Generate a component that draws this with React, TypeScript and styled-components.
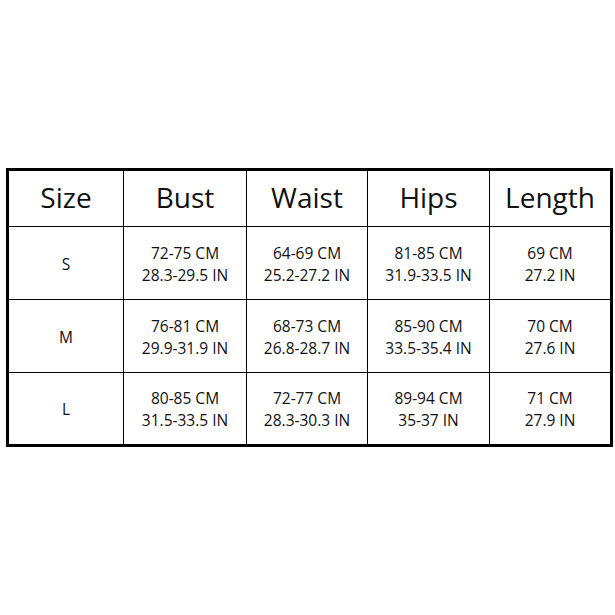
import React from "react";
import styled, { createGlobalStyle } from "styled-components";

const Global = createGlobalStyle`
  html, body { margin: 0; padding: 0; background: #fff; }
  body { font-family: "Open Sans", "Noto Sans", sans-serif; color: #111; }
`;

const Page = styled.div`
  width: 615px;
  height: 615px;
  padding: 168px 0 0 6px;
  box-sizing: border-box;
`;

const Table = styled.div`
  width: 607px;
  box-sizing: border-box;
  border: 3px solid #000;
  background: #000;
  display: grid;
  grid-template-columns: 114px 122px 120px 121px 120px;
  grid-template-rows: 55px 72px 72px 71px;
  gap: 1px;
`;

const Cell = styled.div<{ $head?: boolean }>`
  background: #fff;
  display: flex;
  flex-direction: column;
  align-items: center;
  justify-content: center;
  font-size: ${(p) => (p.$head ? "28px" : "15.5px")};
  line-height: ${(p) => (p.$head ? "1" : "22px")};
  padding-bottom: ${(p) => (p.$head ? "4px" : "0")};
  padding-top: ${(p) => (p.$head ? "0" : "1px")};
  box-sizing: border-box;
  white-space: nowrap;
`;

const headers = ["Size", "Bust", "Waist", "Hips", "Length"];
const rows: [string, string[][]][] = [
  ["S", [["72-75 CM", "28.3-29.5 IN"], ["64-69 CM", "25.2-27.2 IN"], ["81-85 CM", "31.9-33.5 IN"], ["69 CM", "27.2 IN"]]],
  ["M", [["76-81 CM", "29.9-31.9 IN"], ["68-73 CM", "26.8-28.7 IN"], ["85-90 CM", "33.5-35.4 IN"], ["70 CM", "27.6 IN"]]],
  ["L", [["80-85 CM", "31.5-33.5 IN"], ["72-77 CM", "28.3-30.3 IN"], ["89-94 CM", "35-37 IN"], ["71 CM", "27.9 IN"]]],
];

export default function App() {
  return (
    <Page>
      <Global />
      <Table>
        {headers.map((h) => (
          <Cell key={h} $head>{h}</Cell>
        ))}
        {rows.map(([size, vals]) => (
          <React.Fragment key={size}>
            <Cell>{size}</Cell>
            {vals.map((v, i) => (
              <Cell key={i}>
                <span>{v[0]}</span>
                <span>{v[1]}</span>
              </Cell>
            ))}
          </React.Fragment>
        ))}
      </Table>
    </Page>
  );
}
